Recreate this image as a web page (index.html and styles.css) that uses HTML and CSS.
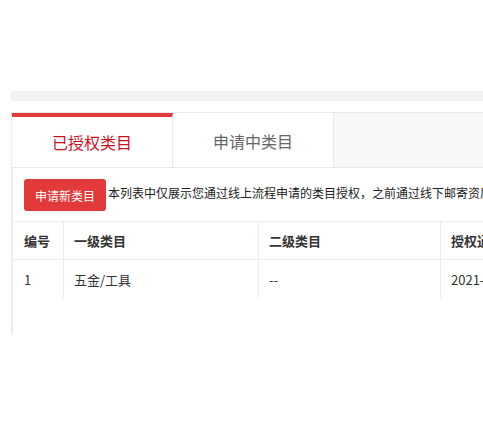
FILE: index.html
```html
<!DOCTYPE html>
<html lang="zh-CN">
<head>
<meta charset="utf-8">
<title>类目授权</title>
<link rel="stylesheet" href="styles.css">
</head>
<body>
<div class="page">
  <div class="topbar"></div>
  <div class="tabs">
    <div class="tab active">已授权类目</div>
    <div class="tab">申请中类目</div>
    <div class="tab-rest"></div>
  </div>
  <div class="panel">
    <div class="toolbar">
      <button class="btn">申请新类目</button>
      <span class="note">本列表中仅展示您通过线上流程申请的类目授权，之前通过线下邮寄资质申请的类目授权请联系您的招商经理查询。</span>
    </div>
    <table class="grid">
      <thead>
        <tr>
          <th class="c1">编号</th>
          <th class="c2">一级类目</th>
          <th class="c3">二级类目</th>
          <th class="c4">授权通过时间</th>
        </tr>
      </thead>
      <tbody>
        <tr>
          <td class="c1">1</td>
          <td class="c2">五金/工具</td>
          <td class="c3">--</td>
          <td class="c4">2021-03-15 10:26:42</td>
        </tr>
      </tbody>
    </table>
  </div>
</div>
</body>
</html>
```

FILE: styles.css
```css
html, body {
  margin: 0;
  padding: 0;
  background: #fff;
  overflow: hidden;
}
body {
  font-family: "Noto Sans CJK SC", "Noto Sans", sans-serif;
  color: #333;
}
.page {
  width: 1100px;
  padding: 91px 0 0 11px;
}
.topbar {
  height: 10px;
  background: #f1f1f1;
  margin-bottom: 11px;
}
.tabs {
  display: flex;
  height: 54px;
  border-top: 1px solid #e8e8e8;
  border-left: 1px solid #ececec;
}
.tab {
  width: 161px;
  border-right: 1px solid #e8e8e8;
  background: #fff;
  display: flex;
  align-items: center;
  justify-content: center;
  font-size: 16px;
  color: #666;
  box-sizing: border-box;
  padding-top: 2px;
}
.tab.active {
  color: #d0101f;
  border-top: 4px solid #e23a3a;
  padding-top: 0;
}
.tab-rest {
  flex: 1;
  background: #f8f8f8;
}
.panel {
  border-top: 1px solid #e8e8e8;
  border-left: 2px solid #ececec;
  padding-bottom: 37px;
}
.toolbar {
  display: flex;
  align-items: center;
  padding: 11px 0 10px 11px;
  white-space: nowrap;
}
.btn {
  height: 32px;
  width: 82px;
  border: 0;
  border-radius: 3px;
  background: #e23a3a;
  color: #fff;
  font-family: inherit;
  font-size: 12px;
  padding: 0;
  margin-right: 2px;
}
.note {
  font-size: 12px;
  color: #222;
  margin-top: -6px;
}
.grid {
  border-collapse: collapse;
  border-top: 1px solid #ececec;
  font-size: 13px;
  color: #333;
}
.grid th, .grid td {
  text-align: left;
  padding: 0 10px;
  white-space: nowrap;
}
.grid th {
  height: 37px;
  font-weight: bold;
  border-bottom: 1px solid #ececec;
}
.grid td {
  height: 38px;
}
.grid .c1 { width: 29px; padding-left: 11px; }
.grid .c2 { width: 174px; border-left: 1px solid #ececec; }
.grid .c3 { width: 161px; border-left: 1px solid #ececec; }
.grid .c4 { width: 300px; border-left: 1px solid #ececec; }
```
